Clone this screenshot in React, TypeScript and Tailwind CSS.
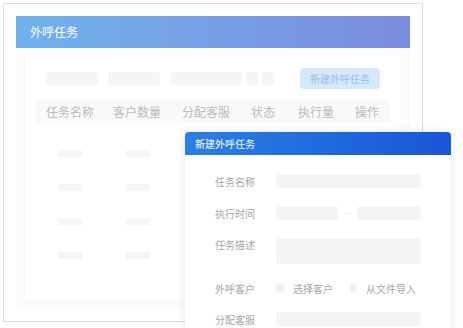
export default function App() {
  const headers = [
    { label: '任务名称', cls: 'ml-0' },
    { label: '客户数量', cls: 'ml-[19px]' },
    { label: '分配客服', cls: 'ml-[21px]' },
    { label: '状态', cls: 'ml-[21px]' },
    { label: '执行量', cls: 'ml-[23px]' },
    { label: '操作', cls: 'ml-[21px]' },
  ];
  const rows = [0, 1, 2, 3];

  return (
    <div
      className="relative w-[463px] h-[328px] overflow-hidden bg-white"
      style={{ fontFamily: '"Noto Sans CJK SC", "Noto Sans", sans-serif' }}
    >
      {/* List card */}
      <div className="ml-[3px] mt-[3px] w-[420px] h-[319px] border border-[#cfe1e1] p-[12px] flex flex-col">
        <div className="h-[32px] shrink-0 flex items-center px-[14px] bg-gradient-to-r from-[#6fb2ee] to-[#7b8ddb] text-white text-[12px]">
          外呼任务
        </div>

        <div className="h-[261px] bg-[#fafbfc] pt-[8px] pl-[10px] pr-[10px]">
          <div className="h-[242px] bg-white px-[10px] pt-[12px]">
            {/* filter row */}
            <div className="flex items-center h-[21px] px-[10px]">
              <div className="w-[52px] h-[13px] rounded-[4px] bg-[#f4f5f7]" />
              <div className="w-[52px] h-[13px] rounded-[4px] bg-[#f4f5f7] ml-[10px]" />
              <div className="w-[72px] h-[13px] rounded-[4px] bg-[#f4f5f7] ml-[10px]" />
              <div className="w-[12px] h-[13px] rounded-[3px] bg-[#f4f5f7] ml-[4px]" />
              <div className="w-[12px] h-[13px] rounded-[3px] bg-[#f4f5f7] ml-[4px]" />
              <div className="ml-auto w-[80px] h-[21px] rounded-[4px] bg-[#d6e9fb] text-[#8fc0ec] text-[10px] flex items-center justify-center">
                新建外呼任务
              </div>
            </div>

            {/* table header */}
            <div className="mt-[11px] h-[23px] bg-[#f8f9fa] flex items-center pl-[10px] text-[12px] text-[#bcbcbc]">
              {headers.map((h) => (
                <span key={h.label} className={h.cls}>
                  {h.label}
                </span>
              ))}
            </div>

            {/* skeleton rows */}
            <div className="mt-[27px] flex flex-col gap-[27px]">
              {rows.map((r) => (
                <div key={r} className="flex h-[7px] pl-[22px] gap-[44px]">
                  <div className="w-[24px] h-[7px] bg-[#f5f6f7]" />
                  <div className="w-[24px] h-[7px] bg-[#f5f6f7]" />
                  <div className="w-[24px] h-[7px] bg-[#f5f6f7]" />
                </div>
              ))}
            </div>
          </div>
        </div>
      </div>

      {/* New task dialog */}
      <div className="absolute left-[185px] top-[132px] w-[266px] h-[210px] bg-white rounded-t-[4px] shadow-[0_0_8px_rgba(0,0,0,0.09)]">
        <div className="h-[23px] rounded-t-[4px] bg-gradient-to-r from-[#2b7fe3] to-[#1a55d8] flex items-center px-[10px] text-white text-[10px]">
          新建外呼任务
        </div>

        <div className="pt-[19px] flex flex-col gap-[18px] text-[10px] text-[#a6a6a6]">
          <div className="flex items-center h-[14px]">
            <span className="w-[70px] text-right">任务名称</span>
            <div className="ml-[21px] w-[145px] h-[14px] rounded-[4px] bg-[#f4f5f7]" />
          </div>

          <div className="flex items-center h-[14px]">
            <span className="w-[70px] text-right">执行时间</span>
            <div className="ml-[21px] w-[62px] h-[14px] rounded-[4px] bg-[#f4f5f7]" />
            <div className="mx-[6px] w-[7px] h-px bg-[#efefef]" />
            <div className="w-[64px] h-[14px] rounded-[4px] bg-[#f4f5f7]" />
          </div>

          <div className="flex items-start h-[26px]">
            <span className="w-[70px] text-right leading-[14px]">任务描述</span>
            <div className="ml-[21px] w-[145px] h-[26px] rounded-[4px] bg-[#f4f5f7]" />
          </div>

          <div className="flex items-center h-[14px] -mt-[1px]">
            <span className="w-[70px] text-right">外呼客户</span>
            <div className="ml-[21px] w-[8px] h-[8px] rounded-full bg-[#f0f0f0]" />
            <span className="ml-[9px]">选择客户</span>
            <div className="ml-[16px] w-[8px] h-[8px] rounded-full bg-[#f0f0f0]" />
            <span className="ml-[9px]">从文件导入</span>
          </div>

          <div className="flex items-center h-[14px] -mt-[1px]">
            <span className="w-[70px] text-right">分配客服</span>
            <div className="ml-[21px] w-[145px] h-[14px] rounded-[4px] bg-[#f4f5f7]" />
          </div>
        </div>
      </div>
    </div>
  );
}
